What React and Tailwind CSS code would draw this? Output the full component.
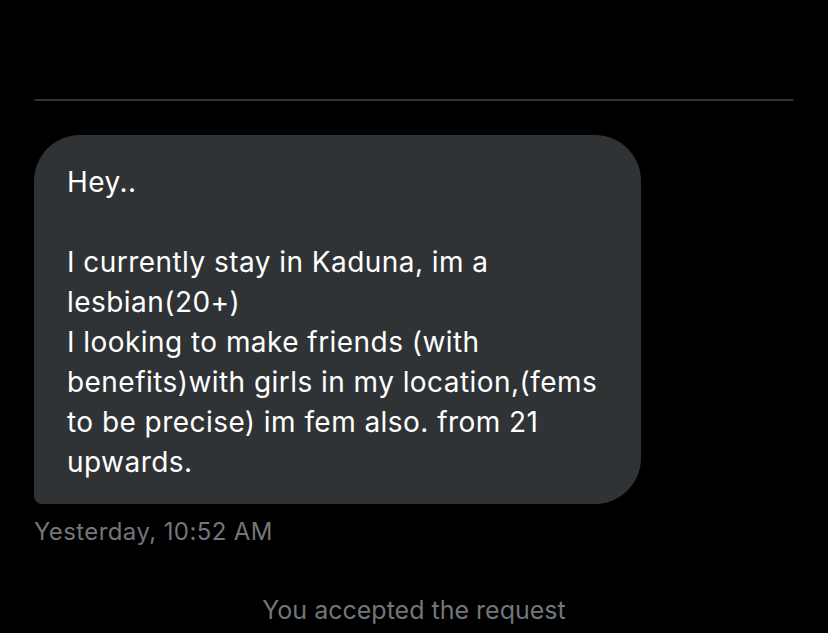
import React from "react";

const lines = [
  "Hey..",
  "",
  "I currently stay in Kaduna, im a",
  "lesbian(20+)",
  "I looking to make friends (with",
  "benefits)with girls in my location,(fems",
  "to be precise) im fem also. from 21",
  "upwards.",
];

export default function App() {
  return (
    <div
      className="w-[828px] h-[633px] bg-black overflow-hidden"
      style={{ fontFamily: "Inter, Roboto, 'Liberation Sans', sans-serif" }}
    >
      <div className="px-[34px] pt-[99px]">
        <div className="h-[2px] bg-[#2f3336] rounded-b" />

        <div className="mt-[34px] w-[607px] bg-[#2f3336] rounded-[46px] rounded-bl-[8px] pl-[33px] pr-6 pt-[27px] pb-[22px] text-white text-[28px] leading-[40px] tracking-[0.45px]">
          {lines.map((l, i) => (
            <div key={i} className="whitespace-nowrap h-[40px]">
              {l}
            </div>
          ))}
        </div>

        <div className="mt-[12px] text-[#71767b] text-[24px] leading-[32px] tracking-[0.4px]">
          Yesterday, 10:52 AM
        </div>
      </div>

      <div className="mt-[46px] text-center text-[#71767b] text-[25px] leading-[32px]">
        You accepted the request
      </div>
    </div>
  );
}
